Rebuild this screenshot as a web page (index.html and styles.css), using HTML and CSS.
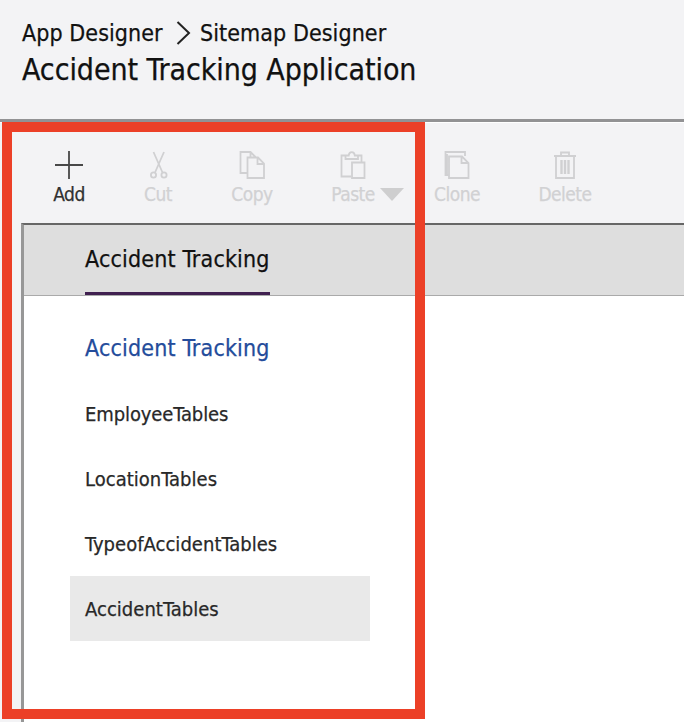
FILE: index.html
```html
<!DOCTYPE html>
<html lang="en">
<head>
<meta charset="utf-8">
<title>Sitemap Designer</title>
<link rel="stylesheet" href="styles.css">
</head>
<body>
<header class="header">
  <nav class="crumbs"><span class="crumb-app">App Designer</span><svg class="chevron" width="15" height="24" viewBox="0 0 15 24"><path d="M1.500 1 13 12 1.500 23"/></svg><span class="crumb-map">Sitemap Designer</span></nav>
  <h1 class="title"><span>Accident Tracking Application</span></h1>
</header>
<div class="toolbar">
  <button class="tool add"><svg width="30" height="30" viewBox="0 0 30 30"><path d="M15 1v28M1 15h28"/></svg><span>Add</span></button>
  <button class="tool cut"><svg width="30" height="30" viewBox="0 0 30 30"><path d="M10.500 2 19.500 22.500M21 2 12 22.500"/><circle cx="10.500" cy="25" r="2.600"/><circle cx="21" cy="25" r="2.600"/></svg><span>Cut</span></button>
  <button class="tool copy"><svg width="30" height="30" viewBox="0 0 30 30"><path d="M10 23H3.500V2H13.500l5 5M10.500 7.500H21l6 6V28H10.500zM20.500 8v6H27M13.500 2v5.500"/></svg><span>Copy</span></button>
  <button class="tool paste"><svg width="30" height="30" viewBox="0 0 30 30"><path d="M13 26.500H3.500V5.500h4M20 5.500h3.500V12M7.500 9V5.500h3.200c0.500-4.500 5.600-4.500 6.100 0H20V9zM14 12.500h12.500V28H14z"/></svg><span>Paste</span><i class="caret"></i></button>
  <button class="tool clone"><svg width="30" height="30" viewBox="0 0 30 30"><path d="M6.500 25H3.500V2H23v4M5 4v20"/><path d="M7 6.500h13l6.500 6.500v15H7zM19.500 6.500V13h7"/></svg><span>Clone</span></button>
  <button class="tool delete"><svg width="30" height="30" viewBox="0 0 30 30"><path d="M4 6h22M11 5.500V2.500h8v3M6 6v22h18V6"/><path class="bars" d="M11.500 10v14M15 10v14M18.500 10v14"/></svg><span>Delete</span></button>
</div>
<main class="designer">
  <div class="tabs"><div class="tab"><span>Accident Tracking</span></div></div>
  <section class="group">
    <h2><span>Accident Tracking</span></h2>
    <ul>
      <li><span class="employee">EmployeeTables</span></li>
      <li><span class="location">LocationTables</span></li>
      <li><span class="type">TypeofAccidentTables</span></li>
      <li class="selected"><span class="accident">AccidentTables</span></li>
    </ul>
  </section>
</main>
<div class="highlight"></div>
</body>
</html>
```
FILE: styles.css
```css
* { box-sizing: border-box; }
body {
  margin: 0;
  width: 684px;
  height: 722px;
  overflow: hidden;
  display: flex;
  flex-direction: column;
  background: #f3f3f5;
  color: #111;
  font-family: "DejaVu Sans Condensed", "DejaVu Sans", sans-serif;
  font-stretch: condensed;
  -webkit-text-stroke: 0.25px currentColor;
}
.header {
  height: 122px;
  padding: 16px 0 0 22px;
  border-bottom: 3px solid #929294;
}
.crumbs {
  display: flex;
  align-items: center;
  height: 34px;
  font-size: 23px;
  letter-spacing: 0.08px;
  white-space: nowrap;
}
.crumb-app { width: 141px; }
.chevron { margin: 0 9px 0 13px; fill: none; stroke: #222; stroke-width: 2; }
.title {
  margin: 0;
  height: 40px;
  line-height: 40px;
  font-size: 30px;
  font-weight: 400;
  letter-spacing: -0.07px;
  white-space: nowrap;
}
.toolbar {
  display: flex;
  height: 101px;
  padding: 27px 0 0 33px;
  border-top: 1px solid #fff;
}
.tool {
  display: flex;
  flex-direction: column;
  align-items: center;
  position: relative;
  flex: none;
  width: 72px;
  height: 60px;
  padding: 0;
  border: 0;
  background: none;
  color: #d1d1d3;
  font: inherit;
  font-size: 19px;
  line-height: 28px;
  letter-spacing: -0.5px;
}
.tool svg { flex: none; fill: none; stroke: #d0d0d2; stroke-width: 1.8; }
.tool .bars { stroke-width: 2.4; }
.tool.add { color: #303030; }
.tool.add svg { stroke: #484848; }
.cut { margin-left: 17px; }
.copy { margin-left: 22px; }
.paste { margin-left: 29px; }
.clone { margin-left: 32px; }
.delete { margin-left: 36px; }
.caret {
  position: absolute;
  left: 63px;
  top: 38px;
  width: 24px;
  height: 13px;
  background: #cececf;
  clip-path: polygon(0 0, 100% 0, 50% 100%);
}
.designer {
  flex: 1;
  margin-left: 21px;
  border-top: 2px solid #666;
  border-left: 3px solid #979797;
  background: #fff;
}
.tabs {
  display: flex;
  height: 71px;
  padding-left: 61px;
  border-bottom: 1px solid #aaa;
  background: #dedede;
}
.tab {
  width: 185px;
  height: 70px;
  border-bottom: 3px solid #402050;
  line-height: 68px;
  font-size: 23px;
  letter-spacing: 0.17px;
  white-space: nowrap;
}
.group { padding: 20px 0 0 46px; }
.group h2 {
  margin: 0;
  padding-left: 15px;
  height: 65px;
  line-height: 64px;
  color: #244c9b;
  font-size: 23px;
  font-weight: 400;
  letter-spacing: 0.17px;
}
.group ul { margin: 0; padding: 0; list-style: none; }
.group li {
  width: 300px;
  height: 65px;
  padding-left: 15px;
  line-height: 66px;
  color: #282828;
  font-size: 20px;
  letter-spacing: 0.03px;
}
.group .employee { letter-spacing: -0.1px; }
.group .selected { background: #e9e9e9; }
.highlight {
  position: absolute;
  left: 2px;
  top: 122px;
  width: 423px;
  height: 597px;
  border: 10px solid #ec4027;
}
```
